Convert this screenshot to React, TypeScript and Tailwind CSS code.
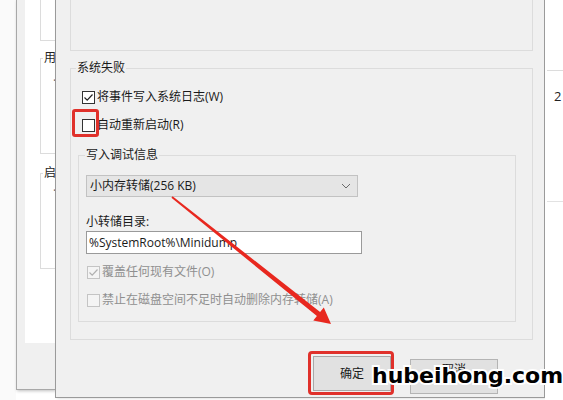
const ui = { fontFamily: '"Open Sans", "Noto Sans CJK SC", sans-serif' };

function Check({ on, disabled }: { on?: boolean; disabled?: boolean }) {
  return (
    <span
      className={`flex h-[13px] w-[13px] shrink-0 items-center justify-center border ${
        disabled ? "border-[#c4c4c4] bg-[#f4f4f4]" : "border-[#333] bg-white"
      }`}
    >
      {on && (
        <svg width="11" height="11" viewBox="0 0 11 11">
          <path d="M1.5 5.5 L4.2 8.2 L9.5 2.5" fill="none" stroke={disabled ? "#b0b0b0" : "#222"} strokeWidth="1.2" />
        </svg>
      )}
    </span>
  );
}

function Row({ children, on, disabled, mark }: { children: React.ReactNode; on?: boolean; disabled?: boolean; mark?: boolean }) {
  return (
    <div className={`flex h-[20px] items-center gap-[2px] ${disabled ? "text-[#8f8f8f]" : "text-[#1a1a1a]"}`}>
      <span className="relative">
        <Check on={on} disabled={disabled} />
        {mark && <span className="absolute -left-[10px] -top-[10px] h-[28px] w-[27px] rounded-[3px] border-[3px] border-[#e0312b]" />}
      </span>
      <span>{children}</span>
    </div>
  );
}

// red pointer from the dump type box down to the OK button
function Arrow() {
  return (
    <svg className="pointer-events-none absolute left-0 top-0" width="563" height="400">
      <polygon
        points="172.6,196.2 320.1,312 323.8,307.6 331,324 313.3,320.4 316.9,316 171.4,197.8"
        fill="#e8281f"
      />
    </svg>
  );
}

export default function App() {
  return (
    <div className="relative flex h-[400px] w-[563px] overflow-hidden bg-white text-[12px]" style={ui}>
      <div className="w-[16px] shrink-0 bg-[#fafafa]" />

      {/* window behind the dialog */}
      <div className="h-[390px] w-[39px] shrink-0 overflow-hidden border-b border-l border-[#a8a8a8] bg-[#f0f0f0] shadow-[1px_1px_3px_rgba(0,0,0,0.25)]">
        <div className="ml-[8px] h-[343px] w-[200px] bg-white pl-[15px]">
          <div className="h-[41px] border-b border-l border-[#dcdcdc]" />
          <fieldset className="mt-[9px] h-[104px] border border-[#dcdcdc]">
            <legend className="ml-[2px] px-[1px] leading-[16px] text-[#222]">用</legend>
            <span className="ml-[12px] block leading-[30px] text-[#666]">·</span>
          </fieldset>
          <fieldset className="mt-[11px] h-[104px] border border-[#dcdcdc]">
            <legend className="ml-[2px] px-[1px] leading-[16px] text-[#222]">启</legend>
            <span className="ml-[12px] block leading-[20px] text-[#666]">·</span>
          </fieldset>
        </div>
      </div>

      {/* startup and recovery dialog */}
      <div className="flex h-[398px] w-[490px] shrink-0 flex-col border-b border-l border-r border-[#9a9a9a] bg-[#f0f0f0] pl-[14px] pr-[11px] shadow-[2px_0_3px_rgba(0,0,0,0.2)]">
        <div className="h-[51px] border-b border-l border-r border-[#dcdcdc]" />

        <fieldset className="mt-[9px] border border-[#dcdcdc]">
          <legend className="ml-[5px] px-[1px] leading-[16px] text-[#1a1a1a]">系统失败</legend>
          <div className="pl-[7px] pb-[17px]">
            <div className="ml-[4px] mt-[11px]">
              <Row on>将事件写入系统日志(W)</Row>
            </div>
            <div className="ml-[4px] mt-[8px]">
              <Row mark>自动重新启动(R)</Row>
            </div>

            <fieldset className="mt-[12px] w-[438px] border border-[#dcdcdc]">
              <legend className="ml-[6px] px-[1px] leading-[16px] text-[#1a1a1a]">写入调试信息</legend>
              <div className="pb-[11px] pl-[7px]">
                <div className="mt-[12px] flex h-[22px] w-[272px] items-center justify-between border border-[#c2c2c2] bg-[#e5e5e5] pl-[3px] pr-[6px] text-[#1a1a1a]">
                  <span>小内存转储(256 KB)</span>
                  <svg width="10" height="6" viewBox="0 0 10 6">
                    <path d="M1 1 L5 5 L9 1" fill="none" stroke="#6a6a6a" strokeWidth="1" />
                  </svg>
                </div>
                <div className="mt-[17px] leading-[16px] text-[#1a1a1a]">小转储目录:</div>
                <div className="mt-[1px] flex h-[23px] w-[276px] items-center border border-[#9a9a9a] bg-white pl-[2px] text-[#1a1a1a]">
                  %SystemRoot%\Minidump
                </div>
                <div className="ml-[1px] mt-[8px]">
                  <Row on disabled>覆盖任何现有文件(O)</Row>
                </div>
                <div className="ml-[1px] mt-[8px]">
                  <Row disabled>禁止在磁盘空间不足时自动删除内存转储(A)</Row>
                </div>
              </div>
            </fieldset>
          </div>
        </fieldset>

        <div className="mt-[16px] flex justify-end gap-[19px] pr-[35px]">
          <div className="relative">
            <button className="flex h-[35px] w-[78px] items-center justify-center border border-[#a8a8a8] bg-[#e1e1e1] text-[#1a1a1a]">
              确定
            </button>
            <span className="absolute -left-[5px] -top-[5px] h-[44px] w-[86px] rounded-[4px] border-[3px] border-[#e0312b]" />
          </div>
          <button className="mt-[3px] flex h-[35px] w-[88px] items-start justify-center border border-[#b4b4b4] bg-[#e1e1e1] pt-[1px] text-[#1a1a1a]">
            取消
          </button>
        </div>
      </div>

      {/* desktop strip on the right */}
      <div className="flex-1 bg-white pl-[2px]">
        <div className="mt-[70px] border-t border-[#dcdcdc]" />
        <div className="mt-[17px] pl-[7px] text-[13px] leading-[16px] text-[#222]">2</div>
        <div className="mt-[97px] border-t border-[#e2e2e2]" />
      </div>

      <Arrow />

      <span
        className="absolute left-[372px] top-[361px] text-[22px] font-bold leading-[30px] text-black [-webkit-text-stroke:4px_white] [paint-order:stroke_fill]"
        style={{ fontFamily: '"DejaVu Sans", sans-serif' }}
      >
        hubeihong.com
      </span>
    </div>
  );
}
